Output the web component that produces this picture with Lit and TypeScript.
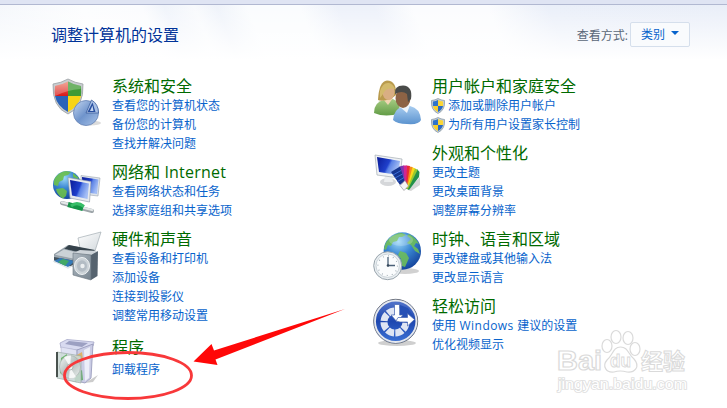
import { LitElement, html, css, svg } from "lit";
import { customElement, property } from "lit/decorators.js";

const icons: Record<string, unknown> = {
  security: svg`
    <path d="M17 2Q24 6 32 7Q33 30 17 37Q1 30 2 7Q10 6 17 2Z" fill="#c9cdd0" stroke="#9a9fa3" stroke-width=".8"/>
    <path d="M17 4.500V19H4Q3.500 15 4 9Q11 8 17 4.500Z" fill="url(#red)"/>
    <path d="M17 4.500V19H30Q30.500 15 30 9Q23 8 17 4.500Z" fill="#3f9a35"/>
    <path d="M17 19V35Q6 29 4 19Z" fill="#2a62b8"/><path d="M17 19V35Q28 29 30 19Z" fill="#f7d416"/>
    <path d="M4 9Q11 8 17 4.500Q23 8 30 9L29.500 12Q16 13 4 19Z" fill="#fff" opacity=".25"/>
    <ellipse cx="39" cy="46" rx="11" ry="2.500" fill="#999" opacity=".35"/>
    <circle cx="35" cy="36" r="12.500" fill="url(#pie)" stroke="#6482b4" stroke-width=".8"/>
    <path d="M35 36L40.500 23Q47.500 27 47.500 36Z" fill="#a9c1e6" stroke="#3f5f9d" stroke-width=".8"/>
    <path d="M36.500 35L41.500 25.500L44.500 35Z" fill="#2950a0"/><path d="M39 34L41.500 28.500L42.500 34Z" fill="#c4d6f0"/>`,
  network: svg`
    <circle cx="16" cy="22" r="14" fill="url(#globe)"/>
    <path d="M4 15Q8 9 15 8L20 9L17 12L13 13L12 17L8 19L7 23L3 22Q2 18 4 15Z M22 10L28 15L26 16L22 14Z M5 26L12 25L16 28L15 33L12 35.500Q6 32 5 26Z" fill="#6cc04a" opacity=".9"/>
    <path d="M30 12.500L49 15L47 33L30 31Z" fill="#dfe4ea" stroke="#9aa4b0" stroke-width=".6"/>
    <path d="M31 14L47.500 16.500L46 31L32 29Z" fill="url(#screen)"/>
    <path d="M17 14.500L40 18.500L38.500 39L19 35Z" fill="#e6eaee" stroke="#8c96a4" stroke-width=".6"/>
    <path d="M19 17L38 20.500L36.500 36L21 32.500Z" fill="url(#screen)"/>
    <path d="M11 40L41 48" stroke="#9da5a9" stroke-width="4" stroke-linecap="round"/>
    <path d="M11 39.300L41 47" stroke="#e3e7e8" stroke-width="2.300" stroke-linecap="round"/>
    <path d="M17 41.500L32 45.500" stroke="#139447" stroke-width="5"/><path d="M20 43Q26 38 33 43.500" stroke="#36bd67" stroke-width="3" fill="none"/>`,
  hardware: svg`
    <path d="M3 24L17 15L44 20L42 32L20 37L3 32Z" fill="#9da8b0"/>
    <path d="M27 8L50 2L44 21L29 18Z" fill="url(#paper)" stroke="#a3adb3" stroke-width=".7"/>
    <path d="M13 19L18 15L44 20L39 25Z" fill="#35424b"/><path d="M3 25L13 19L39 25L27 30Z" fill="#cbd2d7" stroke="#7f8b94" stroke-width=".5"/>
    <path d="M3 27L25 31V36L18 36L3 30Z" fill="#44525c"/>
    <path d="M3 31L9 28L24 31L17 37Z" fill="#347ab9"/><path d="M7 32L12 29L18 31L14 36Z" fill="#42a866"/>
    <path d="M2 31L17 38L23 35" stroke="#dfe5ea" stroke-width="1.200" fill="none"/>
    <path d="M40 24L47 21L46.500 46L40 50Z" fill="#56636f"/>
    <path d="M22 23L29 20L47 21L40 25Z" fill="#ced4d9"/><path d="M22 23L40 25V50L22 45Z" fill="url(#speaker)" stroke="#66727c" stroke-width=".6"/>
    <ellipse cx="31" cy="36" rx="7.500" ry="8.500" fill="#cbd2d7" stroke="#eef1f3" stroke-width="1"/>
    <ellipse cx="31" cy="36" rx="5" ry="5.800" fill="#b3bcc4"/><circle cx="31.500" cy="36" r="2.200" fill="#eceff1"/>`,
  programs: svg`
    <path d="M34 45L47 37L42 44Z" fill="#aaa" opacity=".6"/>
    <path d="M9 5L16 1.500L43 4L42 8L27 12L10 10Z" fill="#d8daf0" stroke="#a6a8c9" stroke-width=".8"/>
    <path d="M14 6L18 3L37 5L31 9Z" fill="#9ca0c2"/>
    <path d="M10 9L26 12V44L11 40Z" fill="#e0e2f3" stroke="#b0b2ce" stroke-width=".6"/>
    <path d="M26 12L42 6L40 40L34 45L26 43Z" fill="#cacce5" stroke="#9294b6" stroke-width=".8"/>
    <path d="M33 12L39 9L38 40L34 43Z" fill="#eceef9"/>
    <path d="M24 18L31 14L32 21L25 25Z" fill="#ddb36a"/><path d="M23 37L31 32L32 42L24 44Z" fill="#65ad6d"/>
    <path d="M6 14L30 18V45L6 40Z" fill="#cddad7" fill-opacity=".85" stroke="#9ba9a6" stroke-width=".7"/>
    <path d="M6 14V39" stroke="#39433f" stroke-width="1.800"/>
    <path d="M10 20L16 16L13 38L9 35Z" fill="#6bb46a"/>
    <ellipse cx="19" cy="29" rx="10.500" ry="11.500" fill="url(#disc)" stroke="#9faaa8" stroke-width=".6"/>
    <path d="M19 29L13 19Q17 17 20 17.500ZM19 29L25 39Q22 41 18 40.500Z" fill="#fff" opacity=".8"/>
    <circle cx="19" cy="29" r="3" fill="#eef3f2" stroke="#a0aba7" stroke-width=".8"/>`,
  users: svg`
    <path d="M3 36Q3 25 13 23L22 22Q29 24 29 36Q15 41 3 36Z" fill="url(#green)"/>
    <path d="M12 22L17 28L22 21Z" fill="#f2d5b2"/>
    <path d="M7 23Q8 4 16 3.500Q26 4 25 18L20 22Q10 25 7 23Z" fill="#b99b4e"/>
    <ellipse cx="17.500" cy="15" rx="6" ry="8" fill="#d9ae83"/><path d="M9 14Q12 5 18 6Q22 7 24 12Q15 10 12 17L9 21Z" fill="#d3ba6c"/>
    <path d="M22 43Q23 32 31 30L39 29Q49 31 50 43Q48 48 36 47Q26 47 22 43Z" fill="url(#blue)"/>
    <path d="M29 30L36 36L39 28Z" fill="#eff5fb"/>
    <ellipse cx="32" cy="21" rx="7.500" ry="10" fill="#8d6345"/>
    <path d="M24 17Q23 8.500 32 8.500Q42 9 40 22L37 25L36 17Q31 13 24 17Z" fill="#4a4b49"/>`,
  appearance: svg`
    <ellipse cx="17" cy="38" rx="8" ry="4" fill="#d5d7da"/><path d="M14 31H21L22 38H13Z" fill="#eceef0"/>
    <path d="M4 11L31 15L29 34L6 31Z" fill="#f0f2f4" stroke="#a5adb5" stroke-width=".7"/>
    <path d="M6 13L29 17L27 31L8 28Z" fill="url(#screen)"/>
    <path d="M37 46L49 33V41L40 47Z" fill="#999" opacity=".4"/>
    <path d="M34 44L46 25L48.500 28L48 33L38 46Z" fill="#23904a"/>
    <path d="M34 44L43.500 24L46.500 26L37 45Z" fill="#98c92e"/>
    <path d="M34 44L41 23L44 24.500L36.500 44Z" fill="#fbd91b"/>
    <path d="M33 44L38.500 22.500L41.500 23L36 44Z" fill="#f58a1c"/>
    <path d="M33 44L35.500 21.500L39 22L35.500 44Z" fill="#ea2a35"/>
    <path d="M32 44L32 21.500L36 21.500L35 44Z" fill="#d32690"/>
    <path d="M31 43L28.500 22.500L32.500 21.500L34 42Z" fill="#7d35b0"/>
    <path d="M20 28L29 22.500L33.500 37L29 41Z" fill="#16348f"/><path d="M22 31L30 26.500M24 34L31.500 30M26.500 37.500L33 33.500" stroke="#3f70d8" stroke-width="1"/>
    <path d="M29 41.500L34 36.500L37.500 42L33 46.500Z" fill="#f5f5f5" stroke="#8a8a8a" stroke-width=".6"/>`,
  clock: svg`
    <ellipse cx="34" cy="41" rx="14" ry="3" fill="#999" opacity=".45"/>
    <circle cx="31.300" cy="21" r="18.700" fill="url(#globe)"/>
    <path d="M20 7Q26 2.500 31 3L35 5L31 7L28 7L26 11L22 12L20 16L17 15L15 20L13 19Q14 11 20 7Z M38 4Q45 8 48 14L45 13L43 16L47 19L49 24L44 21L40 15L36 13L40 9L36 6Z M29 21L35 23L38 28L34 37L31 36L30 29L27 25Z" fill="#6dbd5a" opacity=".9"/>
    <ellipse cx="30" cy="10" rx="12" ry="6" fill="#fff" opacity=".2"/>
    <circle cx="16.700" cy="35.700" r="14" fill="#e9eef1" stroke="#98a4ac" stroke-width="1"/>
    <circle cx="16.700" cy="35.700" r="11.700" fill="#fafcfd" stroke="#cad3d9" stroke-width="1"/>
    <circle cx="16.700" cy="35.700" r="9.800" fill="none" stroke="#93a0aa" stroke-width="1.200" stroke-dasharray=".8 4.330"/>
    <path d="M17 27V35.500H24" fill="none" stroke="#4b6178" stroke-width="1.300"/><circle cx="17" cy="35.500" r="1.300" fill="#35495c"/>`,
  access: svg`
    <ellipse cx="26" cy="46" rx="19" ry="3" fill="#888" opacity=".4"/>
    <circle cx="24.700" cy="24.300" r="22" fill="url(#access)" stroke="#73777f" stroke-width="1"/>
    <circle cx="24.700" cy="24.300" r="20.700" fill="none" stroke="#e7e9ed" stroke-width="1.800"/>
    <circle cx="24" cy="25" r="11" fill="none" stroke="#dfe5f3" stroke-width="7" stroke-dasharray="7.400 1.239" transform="rotate(4 24 25)"/>
    <path d="M29 22V8L37 11L42 19L37 22Z" fill="#2650b5"/>
    <path d="M23.500 7.500H28.500V18H32L26 25L20 18H23.500Z" fill="#fff" stroke="#4262af" stroke-width=".7"/>
    <path d="M27 20.500H36.500V16.500L43.500 22.500L36.500 29V25H29L25 24Z" fill="#fff" stroke="#4262af" stroke-width=".7"/>`,
};

interface Task { label: string; shield?: boolean }
interface Category { icon: string; title: string; tasks: Task[] }

const t = (...labels: string[]): Task[] => labels.map((label) => ({ label }));

const left: Category[] = [
  { icon: "security", title: "系统和安全", tasks: t("查看您的计算机状态", "备份您的计算机", "查找并解决问题") },
  { icon: "network", title: "网络和 Internet", tasks: t("查看网络状态和任务", "选择家庭组和共享选项") },
  { icon: "hardware", title: "硬件和声音", tasks: t("查看设备和打印机", "添加设备", "连接到投影仪", "调整常用移动设置") },
  { icon: "programs", title: "程序", tasks: t("卸载程序") },
];
const right: Category[] = [
  { icon: "users", title: "用户帐户和家庭安全", tasks: [{ label: "添加或删除用户帐户", shield: true }, { label: "为所有用户设置家长控制", shield: true }] },
  { icon: "appearance", title: "外观和个性化", tasks: t("更改主题", "更改桌面背景", "调整屏幕分辨率") },
  { icon: "clock", title: "时钟、语言和区域", tasks: t("更改键盘或其他输入法", "更改显示语言") },
  { icon: "access", title: "轻松访问", tasks: t("使用 Windows 建议的设置", "优化视频显示") },
];

// Latin words are tracked slightly wider than the surrounding CJK text.
const mixed = (text: string) =>
  text.split(/([ A-Za-z]+)/).filter(Boolean).map((p) => (/[A-Za-z]/.test(p) ? html`<span class="latin">${p}</span>` : p));

@customElement("cp-icon")
class CpIcon extends LitElement {
  @property() name = "";
  static styles = css`:host { display: block; width: 50px; height: 50px; } svg { display: block; overflow: visible; }`;
  render() {
    return html`<svg width="50" height="50" viewBox="0 0 50 50" fill="none">
      <defs>
        <linearGradient id="red" x2="0" y2="1"><stop stop-color="#ee8873"/><stop offset="1" stop-color="#d91616"/></linearGradient>
        <linearGradient id="pie" x2="1" y2="1"><stop stop-color="#c6d7ef"/><stop offset=".5" stop-color="#6f94cc"/><stop offset="1" stop-color="#a9c3e8"/></linearGradient>
        <radialGradient id="globe" cx=".4" cy=".25" r=".8"><stop stop-color="#9cd8f8"/><stop offset=".45" stop-color="#3a87d2"/><stop offset="1" stop-color="#123f98"/></radialGradient>
        <linearGradient id="screen" x2="1" y2=".4"><stop stop-color="#0a1a96"/><stop offset=".55" stop-color="#1f40cc"/><stop offset=".65" stop-color="#5c83e6"/><stop offset="1" stop-color="#a3bdf5"/></linearGradient>
        <linearGradient id="paper" x2="1" y2="1"><stop stop-color="#fff"/><stop offset="1" stop-color="#d3d9dd"/></linearGradient>
        <linearGradient id="speaker" x2="1" y2="1"><stop stop-color="#aeb8c0"/><stop offset="1" stop-color="#77848f"/></linearGradient>
        <linearGradient id="disc" x2="1" y2="1"><stop stop-color="#f4f7f7"/><stop offset=".5" stop-color="#b5bfbe"/><stop offset="1" stop-color="#edf2ef"/></linearGradient>
        <linearGradient id="green" x2="0" y2="1"><stop stop-color="#a7cc83"/><stop offset="1" stop-color="#629c46"/></linearGradient>
        <linearGradient id="blue" x2="0" y2="1"><stop stop-color="#a9cdf0"/><stop offset="1" stop-color="#5b93cf"/></linearGradient>
        <linearGradient id="access" x2="0" y2="1"><stop stop-color="#5878cc"/><stop offset=".5" stop-color="#1e47b0"/><stop offset="1" stop-color="#3d73d6"/></linearGradient>
      </defs>${icons[this.name]}</svg>`;
  }
}

@customElement("cp-category")
class CpCategory extends LitElement {
  @property({ attribute: false }) data!: Category;
  static styles = css`
    :host { display: flex; gap: 11px; }
    cp-icon { flex: none; }
    .title { margin: 0; font-size: 16px; font-weight: inherit; line-height: 19px; height: 19px; color: #006a00; white-space: nowrap; }
    .task { display: flex; align-items: center; height: 19px; line-height: 19px; font-size: 12px; color: #0763cc; white-space: nowrap; }
    .shield { width: 14px; height: 16px; margin: 0 3px 0 -1px; }
    .latin { white-space: pre; letter-spacing: .22px; }
    .task .latin { letter-spacing: .45px; }
    .title + .task { margin-top: var(--title-gap, 0px); }
  `;
  render() {
    return html`<cp-icon name=${this.data.icon}></cp-icon>
      <div>
        <h2 class="title">${mixed(this.data.title)}</h2>
        ${this.data.tasks.map((k) => html`<div class="task">${k.shield ? html`<svg class="shield" viewBox="0 0 14 16">
          <path d="M7 .5Q10 2.200 13.500 2.500Q14.500 12 7 15.500Q-.5 12 .5 2.500Q4 2.200 7 .5Z" fill="#c3ced6" stroke="#8593a0" stroke-width=".7"/>
          <path d="M7 2V8H2Q1.800 6 2 3.500Q5 3.200 7 2Z" fill="#2f73cc"/><path d="M7 2V8H12Q12.200 6 12 3.500Q9 3.200 7 2Z" fill="#fbd638"/>
          <path d="M7 8V14Q3 12 2 8Z" fill="#f9cf2a"/><path d="M7 8V14Q11 12 12 8Z" fill="#2a69c4"/></svg>` : ""}${mixed(k.label)}</div>`)}
      </div>`;
  }
}

@customElement("app-root")
class AppRoot extends LitElement {
  static styles = css`
    :host { display: block; position: relative; width: 727px; height: 408px; overflow: hidden; background: #fff;
      font-family: "Open Sans", "Noto Sans CJK SC", sans-serif; }
    .strip { height: 4px; background: #dfe4f3; border-bottom: 1px solid #b1b8d1; }
    .head { box-sizing: border-box; height: 60px; display: flex; align-items: center; padding: 0 37px 0 51px;
      background: linear-gradient(180deg, #fff0 0%, #fff 92%),
        linear-gradient(68deg, #f3f6fb 0%, #fcfdfe 14%, #fbfcfe 22%, #f0f4fb 25%, #f8fafd 29%, #eff3fa 32%, #fafcfe 36%, #fafcfe 43%, #edf1fa 48%, #edf1fa 53%, #fbfcfe 58%, #fbfcfe 68%, #eaeff9 76%, #e9eef8 100%); }
    .heading { flex: 1; margin: 0; font-size: 16px; font-weight: inherit; line-height: 20px; color: #003399; }
    .label { font-size: 12px; color: #5a6778; margin-right: 2px; }
    .select { box-sizing: border-box; width: 60px; height: 25px; margin-top: -2px; display: flex; align-items: center; gap: 6px; padding-left: 10px;
      border: 1px solid #d5dfec; border-radius: 2px; background: #f9fbfd; font-size: 12px; color: #0763cc; }
    .caret { border: 4px solid transparent; border-top-color: #0763cc; border-bottom: 0; margin-top: -2px; }
    .columns { display: grid; grid-template-columns: 320px 320px; padding: 12px 0 0 51px; }
    .column { display: flex; flex-direction: column; gap: 10px; }
    .last { margin-top: 3px; --title-gap: 3px; }
    .overlay { position: absolute; inset: 0; }
    .mark { font-family: "Liberation Sans", "Noto Sans CJK SC", sans-serif; font-weight: 700; }
    .url { font-weight: 400; }
  `;
  render() {
    return html`
      <div class="strip"></div>
      <header class="head">
        <h1 class="heading">调整计算机的设置</h1>
        <span class="label">查看方式:</span>
        <div class="select">类别<i class="caret"></i></div>
      </header>
      <main class="columns">
        <div class="column">${left.map((c, i) => html`<cp-category class=${i === 3 ? "last" : ""} .data=${c}></cp-category>`)}</div>
        <div class="column">${right.map((c) => html`<cp-category .data=${c}></cp-category>`)}</div>
      </main>
      <svg class="overlay" width="727" height="408" viewBox="0 0 727 408" fill="none">
        <g class="mark" fill="#fff" stroke="#dadada" stroke-width="1.200">
          <text x="557" y="370" font-size="28" textLength="45" lengthAdjust="spacingAndGlyphs">Bai</text>
          <ellipse cx="607" cy="346" rx="5" ry="6.500"/><ellipse cx="616" cy="337" rx="5" ry="6.500"/>
          <ellipse cx="628" cy="338" rx="5" ry="6.500"/><ellipse cx="635" cy="349" rx="5" ry="6.500"/>
          <path d="M620.500 347C628 347 628 354 634 359C641 367 634 373 627 372Q620 370 614 372C606 373 602 366 607 360C613 355 613 347 620.500 347Z"/>
          <text x="610" y="367" font-size="18" stroke-width=".9" textLength="21" lengthAdjust="spacingAndGlyphs">du</text>
          <text x="641" y="369" font-size="22" stroke-width="1" textLength="44" lengthAdjust="spacingAndGlyphs">经验</text>
          <text class="url" x="558" y="389" font-size="14" stroke="#dfdfdf" stroke-width="1.700" paint-order="stroke" textLength="129" lengthAdjust="spacingAndGlyphs">jingyan.baidu.com</text>
        </g>
        <ellipse cx="128" cy="375.500" rx="63.500" ry="23" stroke="#f8383a" stroke-width="2.800"/>
        <path d="M193.500 361.500L211.500 344L214 350.500L345 309L215.500 359.500L217.500 365Z" fill="#ff0808"/>
      </svg>`;
  }
}
